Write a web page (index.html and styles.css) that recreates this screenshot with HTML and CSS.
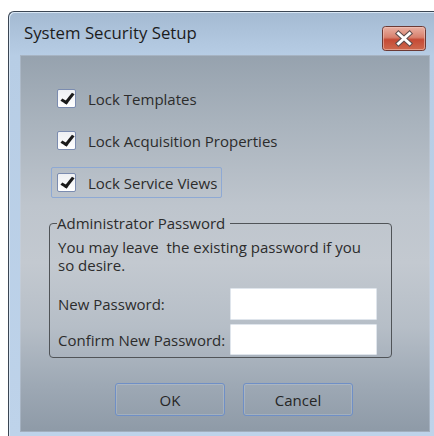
FILE: index.html
```html
<!DOCTYPE html>
<html lang="en">
<head>
<meta charset="utf-8">
<title>System Security Setup</title>
<link rel="stylesheet" href="styles.css">
</head>
<body>
<div class="window">
  <div class="titlebar">
    <span class="title">System Security Setup</span>
    <button class="close" type="button" aria-label="Close">
      <svg width="44" height="25" viewBox="0 0 44 25">
        <defs>
          <linearGradient id="closeFill" x1="0" y1="0" x2="0" y2="1">
            <stop offset="0" stop-color="#eab3a6"/>
            <stop offset="0.45" stop-color="#d8816e"/>
            <stop offset="0.55" stop-color="#c54a35"/>
            <stop offset="1" stop-color="#cf6b4f"/>
          </linearGradient>
        </defs>
        <rect x="0.5" y="0.5" width="43" height="24" rx="3" fill="url(#closeFill)" stroke="#6b3a35"/>
        <rect x="1.5" y="1.5" width="41" height="22" rx="2" fill="none" stroke="#f3c9bf" stroke-opacity="0.55"/>
        <path d="M16.5 7.5 L27.5 17.5 M27.5 7.5 L16.5 17.5" stroke="#5d4b4b" stroke-width="5" stroke-linecap="square"/>
        <path d="M16.5 7.5 L27.5 17.5 M27.5 7.5 L16.5 17.5" stroke="#ffffff" stroke-width="3" stroke-linecap="square"/>
      </svg>
    </button>
  </div>

  <div class="client">
    <div class="options">
      <label class="option">
        <span class="box checked"></span>
        <span class="option-text">Lock Templates</span>
      </label>
      <label class="option">
        <span class="box checked"></span>
        <span class="option-text">Lock Acquisition Properties</span>
      </label>
      <label class="option focused">
        <span class="box checked"></span>
        <span class="option-text">Lock Service Views</span>
      </label>
    </div>

    <fieldset class="group">
      <legend class="group-title">Administrator Password</legend>
      <p class="note">You may leave&nbsp; the existing password if you<br>so desire.</p>
      <div class="fields">
        <label class="field-label" for="pw1">New Password:</label>
        <input class="field" id="pw1" type="password">
        <label class="field-label" for="pw2">Confirm New Password:</label>
        <input class="field" id="pw2" type="password">
      </div>
    </fieldset>

    <div class="actions">
      <button class="btn" type="button">OK</button>
      <button class="btn" type="button">Cancel</button>
    </div>
  </div>
</div>
</body>
</html>
```

FILE: styles.css
```css
html, body {
  margin: 0;
  padding: 0;
  background: #ffffff;
  width: 434px;
  height: 436px;
  overflow: hidden;
}

body {
  font-family: "Open Sans", "Noto Sans", sans-serif;
  font-size: 15px;
  color: #2c2c2c;
}

/* window frame */
.window {
  margin: 11px 0 0 8px;
  width: 410px;
  padding: 0 4px 4px 11px;
  border-left: 1px solid #3b4654;
  border-top: 1px solid #3b4654;
  border-top-left-radius: 6px;
  background: linear-gradient(180deg, #a4bad2 0px, #b7cde5 44px, #bed3ea 100%);
  box-shadow: inset 1px 1px 0 #d8e6f4;
}

.titlebar {
  height: 43px;
  display: flex;
  align-items: flex-start;
  justify-content: space-between;
}

.title {
  margin: 10px 0 0 4px;
  font-size: 16.8px;
  line-height: 22px;
  color: #1c1c1c;
}

.close {
  margin: 14px 4px 0 0;
  padding: 0;
  border: 0;
  background: none;
  width: 44px;
  height: 25px;
  display: block;
}
.close svg { display: block; }

/* client area */
.client {
  width: 410px;
  height: 377px;
  box-sizing: border-box;
  padding-top: 28px;
  background: linear-gradient(180deg,
    #96a2ae 0%,
    #a9b3bd 18%,
    #bec5cd 40%,
    #c3c9d0 55%,
    #b6bec7 72%,
    #9da8b4 88%,
    #8e9aa7 100%);
  box-shadow: inset 0 0 0 1px rgba(200, 216, 234, 0.35);
}

.options {
  display: flex;
  flex-direction: column;
  align-items: flex-start;
  gap: 11px;
  padding-left: 31px;
}

.option {
  display: flex;
  align-items: center;
  height: 29px;
  padding: 0 4px 0 5px;
  border: 1px solid transparent;
  border-radius: 2px;
}

.option.focused {
  border-color: #8ea9d4;
}

.box {
  width: 17px;
  height: 17px;
  border: 1px solid #7b8cb0;
  border-radius: 2px;
  background: linear-gradient(180deg, #eef0f3, #ffffff);
  margin-right: 12px;
  position: relative;
  flex: none;
}

.box.checked::after {
  content: "";
  position: absolute;
  left: 6px;
  top: 1px;
  width: 4px;
  height: 10px;
  border-right: 3px solid #1a1a1a;
  border-bottom: 3px solid #1a1a1a;
  transform: rotate(38deg) skewY(-8deg);
}

.option-text {
  line-height: 20px;
}

/* password group */
.group {
  margin: 17px 0 0 29px;
  width: 343px;
  box-sizing: border-box;
  padding: 2px 14px 2px 8px;
  border: 1px solid #505458;
  border-radius: 4px;
  min-width: 0;
}

.group-title {
  padding: 0 5px 0 0;
  margin-left: -1px;
  line-height: 17px;
}

.note {
  margin: 4px 0 0;
  line-height: 18px;
}

.fields {
  margin-top: 14px;
  display: grid;
  grid-template-columns: 172px 147px;
  row-gap: 4px;
  align-items: center;
}

.field-label {
  line-height: 18px;
}

.field {
  box-sizing: border-box;
  width: 147px;
  height: 32px;
  margin: 0;
  border: 1px solid #dfe5ec;
  border-radius: 1px;
  background: #ffffff;
  outline: none;
}

.field + .field-label + .field {
  height: 31px;
}

/* dialog buttons */
.actions {
  display: flex;
  gap: 18px;
  margin: 25px 0 0 95px;
}

.btn {
  width: 110px;
  height: 33px;
  padding: 0;
  border: 1px solid #6f8fc6;
  border-radius: 3px;
  background: transparent;
  box-shadow: inset 0 0 0 1px rgba(210, 222, 236, 0.25);
  font-family: "Open Sans", "Noto Sans", sans-serif;
  font-size: 15px;
  color: #262626;
}
```
